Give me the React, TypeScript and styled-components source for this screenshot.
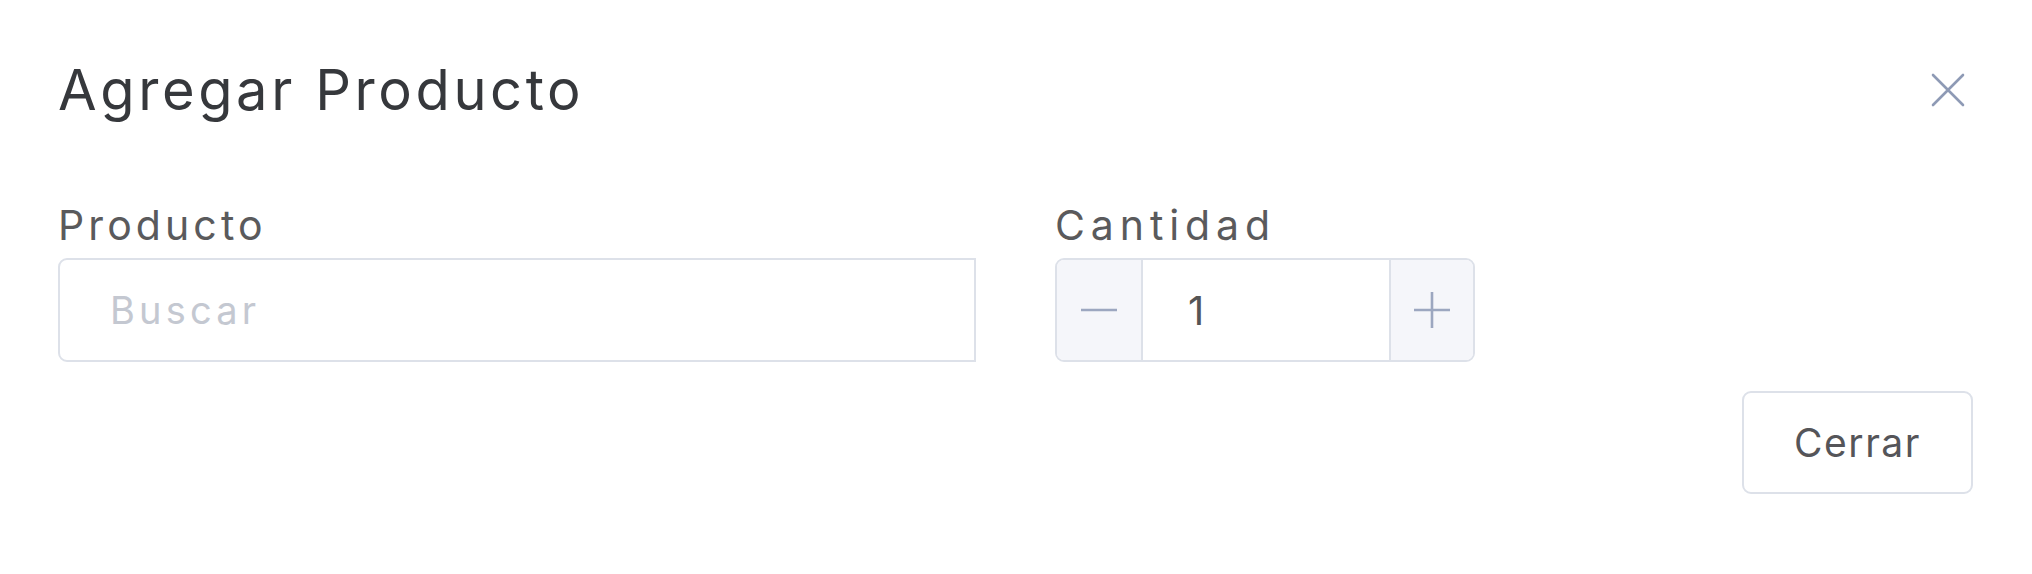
import React from "react";
import styled, { createGlobalStyle } from "styled-components";

const Global = createGlobalStyle`
  html, body { margin: 0; padding: 0; background: #ffffff; }
  body { font-family: Inter, "Noto Sans", Arial, sans-serif; }
  * { box-sizing: border-box; }
`;

const Modal = styled.div`
  width: 2032px;
  height: 574px;
  background: #ffffff;
  padding: 0 59px 0 58px;
  display: flex;
  flex-direction: column;
`;

const Header = styled.div`
  display: flex;
  align-items: flex-start;
  justify-content: space-between;
  padding-top: 57px;
`;

const Title = styled.h2`
  margin: 0;
  font-size: 56px;
  line-height: 66px;
  font-weight: 400;
  color: #36383c;
  letter-spacing: 3.6px;
`;

const CloseButton = styled.button`
  border: none;
  background: transparent;
  padding: 0;
  margin: 15px 7px 0 0;
  width: 36px;
  height: 36px;
  display: flex;
  align-items: center;
  justify-content: center;
  color: #8e9ab5;
  cursor: pointer;
`;

const Body = styled.div`
  margin-top: 77px;
  display: grid;
  grid-template-columns: repeat(12, 1fr);
  column-gap: 79px;
`;

const Field = styled.div<{ $span: number }>`
  grid-column: span ${(p) => p.$span};
  display: flex;
  flex-direction: column;
`;

const Label = styled.label<{ $spacing?: number }>`
  font-size: 41px;
  line-height: 50px;
  color: #5a5a5c;
  font-weight: 400;
  margin-bottom: 8px;
  letter-spacing: ${(p) => p.$spacing ?? 4.1}px;
`;

const TextInput = styled.input`
  height: 104px;
  width: 100%;
  border: 2px solid #dde1e9;
  border-radius: 9px 0 0 9px;
  padding: 0 20px 0 50px;
  font-family: Inter, "Noto Sans", Arial, sans-serif;
  font-size: 38px;
  letter-spacing: 4.2px;
  color: #555;
  outline: none;
  &::placeholder {
    color: #c4c8d1;
  }
`;

const Stepper = styled.div`
  height: 104px;
  display: flex;
  border: 2px solid #dde1e9;
  border-radius: 9px;
  overflow: hidden;
`;

const StepButton = styled.button<{ $side: "left" | "right" }>`
  width: ${(p) => (p.$side === "left" ? "86px" : "84px")};
  flex: none;
  border: none;
  ${(p) => (p.$side === "left" ? "border-right" : "border-left")}: 2px solid #dde1e9;
  background: #f5f6fa;
  display: flex;
  align-items: center;
  justify-content: center;
  color: #9ca7c0;
  padding: 0;
  cursor: pointer;
`;

const QtyInput = styled.input`
  flex: 1;
  min-width: 0;
  border: none;
  padding: 0 0 0 45px;
  font-family: Inter, "Noto Sans", Arial, sans-serif;
  font-size: 40px;
  color: #555;
  outline: none;
  background: #fff;
`;

const Footer = styled.div`
  display: flex;
  justify-content: flex-end;
  margin-top: 29px;
`;

const SecondaryButton = styled.button`
  width: 231px;
  height: 103px;
  border: 2px solid #dde1e9;
  border-radius: 9px;
  background: #ffffff;
  font-family: Inter, "Noto Sans", Arial, sans-serif;
  font-size: 39px;
  color: #555559;
  letter-spacing: 1.5px;
  cursor: pointer;
`;

export default function App() {
  return (
    <>
      <Global />
      <Modal>
        <Header>
          <Title>Agregar Producto</Title>
          <CloseButton aria-label="Cerrar">
            <svg width="34" height="34" viewBox="0 0 34 34">
              <path d="M2 2 L32 32 M32 2 L2 32" stroke="currentColor" strokeWidth="2.6" strokeLinecap="round" />
            </svg>
          </CloseButton>
        </Header>
        <Body>
          <Field $span={6}>
            <Label>Producto</Label>
            <TextInput placeholder="Buscar" />
          </Field>
          <Field $span={3}>
            <Label $spacing={5.9}>Cantidad</Label>
            <Stepper>
              <StepButton $side="left" aria-label="Restar">
                <svg width="38" height="4" viewBox="0 0 38 4">
                  <path d="M1 2 H37" stroke="currentColor" strokeWidth="2.6" />
                </svg>
              </StepButton>
              <QtyInput defaultValue="1" />
              <StepButton $side="right" aria-label="Sumar">
                <svg width="36" height="36" viewBox="0 0 36 36">
                  <path d="M0 18 H36 M18 0 V36" stroke="currentColor" strokeWidth="2.6" />
                </svg>
              </StepButton>
            </Stepper>
          </Field>
        </Body>
        <Footer>
          <SecondaryButton>Cerrar</SecondaryButton>
        </Footer>
      </Modal>
    </>
  );
}
